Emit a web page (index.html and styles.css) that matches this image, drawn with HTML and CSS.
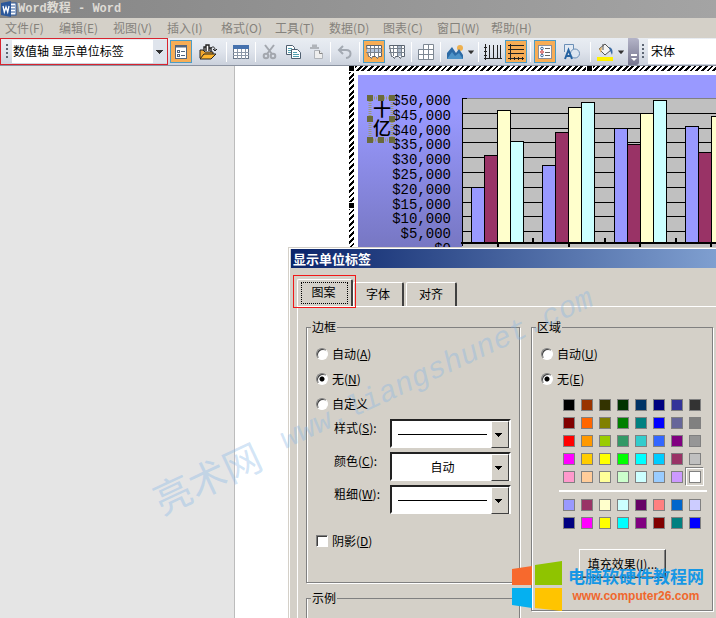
FILE: index.html
```html
<!DOCTYPE html>
<html lang="zh-CN">
<head>
<meta charset="UTF-8"/>
<meta name="viewport" content="width=device-width, initial-scale=1.0"/>
<title>Word教程 - Word</title>
<link rel="stylesheet" href="styles.css">
</head>
<body>

<!-- TITLE BAR -->
<header class="titlebar">
  <svg class="app-icon" width="16" height="16" viewBox="0 0 16 16">
    <rect x="7" y="2" width="8" height="12" fill="#fff" stroke="#2b579a"/>
    <path d="M10 5h4M10 8h4M10 11h4" stroke="#2b579a"/>
    <path d="M0 2l10-2v16l-10-2z" fill="#2b579a"/>
    <path d="M2 5l1.3 6L5 6l1.7 5L8 5" fill="none" stroke="#fff" stroke-width="1.3"/>
  </svg>
  <h1 class="app-title">Word教程 - Word</h1>
</header>

<!-- MENU -->
<nav class="menubar">
  <button class="menu-item">文件(F)</button>
  <button class="menu-item">编辑(E)</button>
  <button class="menu-item">视图(V)</button>
  <button class="menu-item">插入(I)</button>
  <button class="menu-item">格式(O)</button>
  <button class="menu-item">工具(T)</button>
  <button class="menu-item">数据(D)</button>
  <button class="menu-item">图表(C)</button>
  <button class="menu-item">窗口(W)</button>
  <button class="menu-item">帮助(H)</button>
</nav>

<!-- TOOLBAR -->
<div class="toolbar">
  <div class="object-box">
    <span class="grip"></span>
    <select class="object-select" aria-label="图表对象">
      <option>数值轴 显示单位标签</option>
    </select>
  </div>
  <button class="tool on" aria-label="设置格式">
    <svg width="16" height="16" viewBox="0 0 16 16">
      <rect x="2.500" y="1.500" width="11" height="13" fill="#fff" stroke="#54657c"/>
      <path d="M2 2.500h12" stroke="#54657c" stroke-width="2"/>
      <rect x="4.500" y="6.500" width="2" height="2" fill="none" stroke="#54657c"/><rect x="4.500" y="10.500" width="2" height="2" fill="none" stroke="#54657c"/>
      <path d="M8 7.500h4M8 11.500h4" stroke="#54657c"/>
    </svg>
  </button>
  <button class="tool wide" aria-label="图表类型">
    <svg width="18" height="16" viewBox="0 0 18 16">
      <path d="M5 8V3h2v4V1h3v6V4h2v4" fill="#fff" stroke="#222" stroke-width="1.400"/>
      <path d="M1 14V6h3l2 2h8v2" fill="#f0a830" stroke="#222"/>
      <path d="M1 15l4-5h12l-5 5z" fill="#ffb62e" stroke="#222"/>
      <path d="M12 4c2-2 4-1 4 2M14 5l2 2 2-2" fill="none" stroke="#222"/>
    </svg>
  </button>
  <span class="sep"></span>
  <button class="tool" aria-label="数据表">
    <svg width="16" height="16" viewBox="0 0 16 16">
      <rect x="0.500" y="1.500" width="15" height="13" fill="#fff" stroke="#6a7788"/>
      <rect x="0" y="1" width="16" height="4" fill="#4672ae"/>
      <path d="M0 8.500h16M0 11.500h16M4.500 5v10M8.500 5v10M12.500 5v10" stroke="#8c98a8"/>
    </svg>
  </button>
  <span class="sep"></span>
  <button class="tool" aria-label="剪切">
    <svg width="16" height="16" viewBox="0 0 16 16" fill="none" stroke="#a3a7ae" stroke-width="2">
      <path d="M3 1l7 9M12 1l-7 9"/><circle cx="4" cy="12" r="2.300"/><circle cx="11" cy="12" r="2.300"/>
    </svg>
  </button>
  <button class="tool" aria-label="复制">
    <svg width="16" height="16" viewBox="0 0 16 16" fill="#fff" stroke="#4f5f70">
      <path d="M1.500 1.500h6l2 2v7h-8z"/><path d="M3 4.500h4M3 6.500h4M3 8.500h4" stroke="#51a0b0"/>
      <path d="M6.500 5.500h6l3 3v6h-9z"/><path d="M8 8.500h4M8 10.500h6M8 12.500h6" stroke="#51a0b0"/>
    </svg>
  </button>
  <button class="tool" aria-label="粘贴">
    <svg width="16" height="16" viewBox="0 0 16 16" fill="#eee" stroke="#b0b4ba">
      <path d="M2 4h9M4 2.500h4v-1h-3v1" stroke-width="2"/>
      <path d="M6.500 6.500h5l3 3v5h-8z"/><path d="M11.500 6.500v3h3" stroke="#888"/>
    </svg>
  </button>
  <span class="sep"></span>
  <button class="tool" aria-label="撤消">
    <svg width="16" height="16" viewBox="0 0 16 16" fill="none" stroke="#a3a9b2" stroke-width="2">
      <path d="M6 2L2 6l4 4M2 6h7c6 0 6 7 0 8"/>
    </svg>
  </button>
  <span class="sep"></span>
  <button class="tool on" aria-label="按行">
    <svg width="16" height="16" viewBox="0 0 16 16">
      <path d="M.5 1.500h15v11h-3l-1 2-2-2h-3l-1 2-2-2h-1z" fill="#fff" stroke="#59636f"/>
      <rect x="1" y="5" width="14" height="4" fill="#b9c9df"/>
      <path d="M0 4.500h16M0 8.500h16M4.500 2v10M8.500 2v10M12.500 2v10" stroke="#77818d"/>
    </svg>
  </button>
  <button class="tool" aria-label="按列">
    <svg width="16" height="16" viewBox="0 0 16 16">
      <path d="M.5 1.500h15v11h-3l-1 2-2-2h-3l-1 2-2-2h-1z" fill="#fff" stroke="#59636f"/>
      <rect x="8" y="2" width="4" height="10" fill="#aab8ca"/>
      <path d="M0 4.500h16M0 8.500h16M4.500 2v10M8.500 2v10M12.500 2v10" stroke="#77818d"/>
    </svg>
  </button>
  <span class="sep"></span>
  <button class="tool" aria-label="模拟运算表">
    <svg width="16" height="16" viewBox="0 0 16 16">
      <path d="M5.500.5h10v15H.5v-10h5z" fill="#fff" stroke="#7e8893"/>
      <path d="M5.500 5v10M10.500 0v15M5 5.500h11M0 10.500h16" stroke="#7e8893"/>
    </svg>
  </button>
  <span class="sep"></span>
  <button class="tool" aria-label="绘图区">
    <svg width="16" height="16" viewBox="0 0 16 16">
      <circle cx="13" cy="4" r="3" fill="#eeb04e"/>
      <path d="M0 15V9l5-6 4 6 3-4 4 6v4z" fill="#2c6aa5"/><path d="M0 15l5-7 3 4 4-3 4 6z" fill="#4d93c8"/>
    </svg>
  </button>
  <button class="drop" aria-label="更多"></button>
  <span class="sep"></span>
  <button class="tool" aria-label="分类轴网格线">
    <svg width="18" height="16" viewBox="0 0 18 16" fill="none" stroke="#222" stroke-width="1">
      <path d="M1.500 0v16M0 14.500h18M5.500 1v13M9.500 1v13M13.500 1v13M16.500 1v13M0 3.500h3M0 7.500h3M0 11.500h3"/>
    </svg>
  </button>
  <button class="tool on" aria-label="数值轴网格线">
    <svg width="18" height="16" viewBox="0 0 18 16" fill="none" stroke="#222">
      <path d="M3.500 0v16M1 14.500h16M1 1.500h16M1 5.500h16M1 9.500h16M7.500 13v3M11.500 13v3M15.500 13v3"/>
    </svg>
  </button>
  <span class="sep"></span>
  <button class="tool on" aria-label="图例">
    <svg width="16" height="16" viewBox="0 0 16 16">
      <rect x="1.500" y="1.500" width="13" height="13" fill="#fff" stroke="#8b8f99"/>
      <g fill="none"><circle cx="5" cy="4.500" r="1.300" stroke="#39689c"/><circle cx="5" cy="8" r="1.300" stroke="#c33"/><circle cx="5" cy="11.500" r="1.300" stroke="#39689c"/></g>
      <path d="M8 4.500h5M8 8.500h5M8 11.500h5" stroke="#666"/>
    </svg>
  </button>
  <button class="tool wide" aria-label="绘图">
    <svg width="16" height="16" viewBox="0 0 16 16">
      <path d="M.5 8V.5h9v5" fill="#e2eaf4" stroke="#6b8fb6"/>
      <circle cx="11" cy="9.500" r="4.500" fill="#dce6f1" stroke="#6b8fb6"/>
      <path d="M1 15L4.500 6 8 15M2 12h5" fill="none" stroke="#2562a0" stroke-width="2"/>
    </svg>
  </button>
  <span class="sep"></span>
  <button class="tool" aria-label="填充颜色">
    <svg width="18" height="18" viewBox="0 0 18 18">
      <path d="M3 6l6-5 6 6-6 5z" fill="#f4f4f4" stroke="#555"/><path d="M7 1v6" stroke="#555"/>
      <path d="M13 4c4 1 4 5 3 8-1-2-1-3-2-4z" fill="#3d6da5"/><path d="M3 6l3-2-1 6z" fill="#e0b060"/>
      <rect x="1" y="14" width="16" height="4" fill="#fff200"/>
    </svg>
  </button>
  <button class="drop" aria-label="填充颜色列表"></button>
  <button class="overflow" aria-label="工具栏选项"></button>
  <span class="grip"></span>
  <select class="font-select" aria-label="字体">
    <option>宋体</option>
  </select>
</div>

<!-- DOCUMENT -->
<main class="workspace">
  <div class="gutter"></div>
  <div class="page">
    <div class="chart-object">
      <svg class="chart" width="480" height="240" viewBox="0 0 480 240">
        <defs>
          <linearGradient id="chartBg" x1="0" y1="0" x2="0" y2="1">
            <stop offset="0.150" stop-color="#9999ff"/>
            <stop offset="0.800" stop-color="#7272ba"/>
            <stop offset="1" stop-color="#6060a0"/>
          </linearGradient>
        </defs>
        <rect width="480" height="240" fill="url(#chartBg)"/>
        <rect x="104" y="23" width="376" height="150" fill="#c0c0c0"/>
        <path d="M104 23.500h376" stroke="#808080"/>
        <path class="grid" d="M104 38.500h376M104 53.500h376M104 67.500h376M104 82.500h376M104 97.500h376M104 112.500h376M104 127.500h376M104 141.500h376M104 156.500h376"/>
        <g class="bars"></g>
        <path d="M104.500 23v148M104 23.500h5" stroke="#000" fill="none"/>
        <path d="M103 168h377" stroke="#000" stroke-width="2"/>
        <path d="M140 168v4M211 168v4M282 168v4M353 168v4M175 163v4M247 163v4M318 163v4" stroke="#000" stroke-width="2"/>
        <g class="axis-labels">
          <text x="93" y="30">$50,000</text>
          <text x="93" y="45">$45,000</text>
          <text x="93" y="60">$40,000</text>
          <text x="93" y="74">$35,000</text>
          <text x="93" y="89">$30,000</text>
          <text x="93" y="104">$25,000</text>
          <text x="93" y="119">$20,000</text>
          <text x="93" y="134">$15,000</text>
          <text x="93" y="148">$10,000</text>
          <text x="93" y="163">$5,000</text>
          <text x="93" y="178">$0</text>
        </g>
        <rect x="12" y="23" width="22" height="42" fill="none" stroke="#9a9a78" stroke-width="3" stroke-dasharray="1 1"/>
        <g class="unit-label">
          <text x="24" y="41">十</text>
          <text x="24" y="60">亿</text>
        </g>
        <path d="M9 20h6v6H9zM20 20h6v6h-6zM31 20h6v6h-6zM9 41h6v6H9zM31 41h6v6h-6zM9 62h6v6H9zM20 62h6v6h-6zM31 62h6v6h-6z" fill="#6a6a3c"/>
      </svg>
      <span class="handle corner"></span>
      <span class="handle top"></span>
      <span class="handle left"></span>
    </div>
  </div>
</main>

<!-- FORMAT DIALOG -->
<section class="dialog" role="dialog" aria-label="显示单位标签">
  <h2 class="dialog-title">显示单位标签</h2>
  <div class="tabs">
    <button class="tab active">图案</button>
    <button class="tab">字体</button>
    <button class="tab">对齐</button>
  </div>
  <div class="panel">
    <div class="column">
      <fieldset class="group border-group">
        <legend>边框</legend>
        <label class="choice"><input type="radio" name="border"/><span>自动(<u>A</u>)</span></label>
        <label class="choice"><input type="radio" name="border" checked/><span>无(<u>N</u>)</span></label>
        <label class="choice"><input type="radio" name="border"/><span>自定义</span></label>
        <div class="fields">
          <div class="field">
            <label for="lineStyle">样式(<u>S</u>):</label>
            <span class="combo line"><select id="lineStyle"><option></option></select></span>
          </div>
          <div class="field">
            <label for="lineColor">颜色(<u>C</u>):</label>
            <span class="combo"><select id="lineColor"><option>自动</option></select></span>
          </div>
          <div class="field">
            <label for="lineWeight">粗细(<u>W</u>):</label>
            <span class="combo line"><select id="lineWeight"><option></option></select></span>
          </div>
        </div>
        <label class="choice"><input type="checkbox"/><span>阴影(<u>D</u>)</span></label>
      </fieldset>
      <fieldset class="group sample-group">
        <legend>示例</legend>
      </fieldset>
    </div>
    <fieldset class="group area-group">
      <legend>区域</legend>
      <label class="choice"><input type="radio" name="area"/><span>自动(<u>U</u>)</span></label>
      <label class="choice"><input type="radio" name="area" checked/><span>无(<u>E</u>)</span></label>
      <div class="palette standard"></div>
      <div class="palette chart-colors"></div>
      <button class="fill-btn">填充效果(<u>I</u>)...</button>
    </fieldset>
  </div>
</section>

<!-- WATERMARKS -->
<div class="watermark"><span class="mark-name">亮术网</span><span class="mark-url">www.liangshunet.com</span></div>
<div class="site-badge">
  <svg width="50" height="50" viewBox="0 0 50 50">
    <path d="M0 8l20-3v19H0z" fill="#f7692d"/>
    <path d="M23 4l27-4v24H23z" fill="#8fc400"/>
    <path d="M0 27h20v20L0 44z" fill="#05b0f0"/>
    <path d="M23 27h27v23l-27-3z" fill="#ffc400"/>
  </svg>
  <div class="badge-text">
    <span class="badge-name">电脑软硬件教程网</span>
    <span class="badge-url">www.computer26.com</span>
  </div>
</div>

<script>
(function(){
const standard = [
  "#000000","#993300","#333300","#003300","#003366","#000080","#333399","#333333",
  "#800000","#ff6600","#808000","#008000","#008080","#0000ff","#666699","#808080",
  "#ff0000","#ff9900","#99cc00","#339966","#33cccc","#3366ff","#800080","#969696",
  "#ff00ff","#ffcc00","#ffff00","#00ff00","#00ffff","#00ccff","#993366","#c0c0c0",
  "#ff99cc","#ffcc99","#ffff99","#ccffcc","#ccffff","#99ccff","#cc99ff","#ffffff"
];
const chartColors = [
  "#9999ff","#993366","#ffffcc","#ccffff","#660066","#ff8080","#0066cc","#ccccff",
  "#000080","#ff00ff","#ffff00","#00ffff","#800080","#800000","#008080","#0000ff"
];

function fillPalette(selector,colors){
  const box=document.querySelector(selector);
  colors.forEach(c=>{
    const b=document.createElement('button');
    b.className='swatch';
    b.style.background=c;
    b.setAttribute('aria-label',c);
    if(c==='#ffffff') b.classList.add('selected');
    box.appendChild(b);
  });
}
fillPalette('.standard',standard);
fillPalette('.chart-colors',chartColors);

// one row per category, bar heights above the axis
const series=["#9999ff","#993366","#ffffcc","#ccffff"];
const data=[[55,87,132,101],[77,110,135,140],[114,98,129,142],[116,90,126,120]];
const bars=document.querySelector('.bars');
data.forEach((row,g)=>{
  row.forEach((h,i)=>{
    const r=document.createElementNS('http://www.w3.org/2000/svg','rect');
    r.setAttribute('x',Math.round(113+g*71.4)+i*13+.5);
    r.setAttribute('y',167.5-h);
    r.setAttribute('width',13);
    r.setAttribute('height',h);
    r.setAttribute('fill',series[i]);
    bars.appendChild(r);
  });
});
})();
</script>
</body>
</html>
```
FILE: styles.css
```css
:root {
  --face:#d4d0c8;
  --shade:#808080;
  --dark:#404040;
}
* {box-sizing:border-box;}
html,body {
  margin:0; padding:0; height:100%; overflow:hidden;
}
body {
  position:relative; display:flex; flex-direction:column; background:#fff; color:#000;
  font:12px/18px "Noto Sans CJK SC", sans-serif;
}
button,select,input {font:inherit; color:inherit; margin:0; padding:0; border:0; border-radius:0;}
svg {display:block;}

/* TITLE BAR AND MENU */
.titlebar {
  display:flex; align-items:center; gap:1px; height:18px; flex:none; padding-left:1px;
  background:linear-gradient(90deg,#858585,#a4a4a4);
}
.app-title {
  margin:0; color:#dedbd5; font:bold 12px/18px "Liberation Mono","Noto Sans CJK SC",monospace;
}
.menubar {display:flex; flex:none; height:20px; padding-left:5px; background:var(--face);}
.menu-item {
  width:54px; background:none; color:#85827c; text-align:left; white-space:nowrap; line-height:20px;
}

/* TOOLBAR */
.toolbar {
  display:flex; align-items:center; flex:none; height:28px;
  background:linear-gradient(#e9edf3,#dfe4ec 50%,#cbd1dc); border-bottom:1px solid #8b93a1;
}
.object-box {
  display:flex; align-items:center; width:168px; height:27px; flex:none; padding:1px 0 1px 2px;
  margin-right:1px; border:1px solid #d8232f;
}
.grip {
  flex:none; width:3px; height:16px; margin:0 3px;
  background:repeating-linear-gradient(#5d6674 0 2px,transparent 2px 4px) left/2px 100% no-repeat;
}
.object-select,.font-select {
  appearance:none; background:#fff; height:23px; line-height:20px; padding:0 0 2px 1px;
}
.object-select {
  flex:1; min-width:0;
  background:
    linear-gradient(to bottom right,#333 50%,transparent 50%) right 3px center/4px 4px no-repeat,
    linear-gradient(to bottom left,#333 50%,transparent 50%) right 7px center/4px 4px no-repeat,
    linear-gradient(#dfe4ec,#dfe4ec) right/14px 100% no-repeat,
    #fff;
}
.font-select {flex:1; min-width:0; height:25px; padding-left:3px;}
.tool {
  display:flex; align-items:center; justify-content:center; flex:none;
  width:22px; height:23px; margin-left:1px; background:none;
}
.tool.wide {width:30px;}
.tool.on {background:#f7ad55; border:1px solid #4c9cc4;}
.sep {flex:none; width:1px; height:20px; margin:0 2px 0 3px; background:#fff;}
.drop {
  flex:none; width:8px; height:22px; margin-left:1px; background:#333;
  clip-path:polygon(10% 45%,90% 45%,50% 62%);
}
.overflow {
  position:relative; flex:none; width:11px; height:27px; margin-left:3px;
  background:linear-gradient(#b4b4c8,#77778f); border-radius:0 3px 3px 0;
}
.overflow::before {
  content:""; position:absolute; left:3px; bottom:9px; width:6px; height:2px; background:#fff;
}
.overflow::after {
  content:""; position:absolute; left:3px; bottom:4px; border:3px solid transparent; border-top-color:#fff; border-bottom:0;
}

/* DOCUMENT */
.workspace {display:flex; flex:1; min-height:0; overflow:hidden;}
.gutter {flex:none; width:235px; background:#e5e5e5; border-right:1px solid #bcbcbc;}
.page {flex:1; min-width:0; padding-left:114px; background:#fff; overflow:hidden;}
.chart-object {
  position:relative; width:max-content; padding:5px;
  background:repeating-linear-gradient(135deg,#000 0 2px,#fff 2px 4px);
}
.chart {border:4px solid #fff; box-sizing:content-box;}
.grid {stroke:#000; fill:none;}
.bars rect {stroke:#000;}
.axis-labels text {font:14px "Liberation Mono",monospace; text-anchor:end;}
.unit-label text {font:500 18px "Noto Sans CJK SC",sans-serif; text-anchor:middle;}
.handle {position:absolute; width:5px; height:5px; background:#000; outline:1px solid #fff;}
.handle.corner {left:0; top:0;}
.handle.top {left:238px; top:0;}
.handle.left {left:0; top:137px;}

/* DIALOG */
.dialog {
  position:absolute; left:288px; right:0; top:247px; bottom:0; overflow:hidden;
  display:flex; flex-direction:column; background:var(--face);
  border:1px solid var(--face); border-width:1px 0 0 1px; box-shadow:inset 1px 1px #fff;
  padding:1px 0 0 2px;
}
.dialog-title {
  margin:0; padding-left:2px; flex:none; color:#fff; font-size:13px; font-weight:bold; line-height:19px;
  background:linear-gradient(90deg,#0a246a,#7f9fd0);
}
.tabs {display:flex; align-items:flex-end; flex:none; padding:11px 0 0 6px;}
.tab {
  width:51px; height:24px; margin-right:2px; padding-bottom:2px; background:var(--face);
  border:solid #fff; border-width:1px 2px 0 1px; border-right-color:var(--dark); border-radius:2px 2px 0 0;
}
.tab.active {
  position:relative; z-index:1; width:56px; height:27px; margin-right:0; padding-right:2px;
}
.tab.active::before {
  content:""; position:absolute; inset:2px 3px 2px 3px; border:1px dotted #000;
}
.tab.active::after {
  content:""; position:absolute; inset:-5px -5px -2px -5px; border:1px solid #f01818;
}
.panel {
  display:flex; align-items:flex-start; gap:11px; flex:1; margin-left:6px; padding:11px 3px 0 8px;
  border:solid #fff; border-width:1px 0 0 1px;
}
.column {flex:1 1 214px; min-width:0;}
.group {
  margin:0; min-width:0; padding:5px 8px 0 9px; border:1px solid var(--shade);
  box-shadow:inset 1px 0 #fff,1px 1px #fff;
}
.group legend {padding:0 1px; margin-left:-5px; line-height:18px;}
.border-group {height:265px;}
.sample-group {height:80px; margin-top:6px;}
.area-group {flex:1 1 182px; height:293px;}
.choice {display:flex; align-items:center; gap:4px; height:25px;}
.choice input {
  appearance:none; flex:none; width:12px; height:12px; background:#fff;
  border:1px solid var(--shade); border-right-color:#fff; border-bottom-color:#fff;
  box-shadow:inset 1px 1px var(--dark);
}
.choice input[type=radio] {border-radius:50%;}
.choice input[type=radio]:checked {background:radial-gradient(circle,#000 0 2px,#fff 3px);}
.fields {padding:2px 0 11px 18px;}
.field {display:flex; align-items:flex-start; height:33px; line-height:20px;}
.field label {flex:none; width:56px;}
.combo {
  position:relative; flex:1; min-width:0; height:29px;
  border:2px solid; border-color:#222 #fff #fff #222; margin-top:1px;
}
.combo select {
  display:block; appearance:none; width:100%; height:100%; padding-right:16px; text-align-last:center;
  background:#fff;
}
.combo::after {
  content:""; position:absolute; right:0; top:0; width:16px; height:100%; pointer-events:none;
  border:1px solid; border-color:#fff var(--dark) var(--dark) #fff;
  background:
    linear-gradient(to bottom right,#000 50%,transparent 50%) 7px center/4px 4px no-repeat,
    linear-gradient(to bottom left,#000 50%,transparent 50%) 3px center/4px 4px no-repeat,
    var(--face);
}
.combo.line::before {
  content:""; position:absolute; left:6px; right:22px; top:50%; border-top:1px solid #000; pointer-events:none;
}

.palette {display:grid; grid-template-columns:repeat(8,18px); width:148px; margin-left:18px; padding:5px 0 4px 1px;}
.chart-colors {border-top:2px solid #fff; padding-top:4px;}
.swatch {width:12px; height:12px; margin:3px; border:1px solid var(--shade);}
.swatch.selected {outline:1px solid #fff; outline-offset:2px; box-shadow:0 0 0 2px var(--face),-1px -1px 0 3px var(--shade);}
.fill-btn {
  display:block; width:87px; height:29px; margin:13px 0 0 38px; background:var(--face); white-space:nowrap;
  border:1px solid; border-color:#fff var(--dark) var(--dark) #fff; box-shadow:inset -1px -1px var(--shade);
}

/* WATERMARKS */
.watermark {
  position:absolute; left:155px; top:481px; display:flex; align-items:center; gap:26px; white-space:nowrap;
  color:rgba(130,180,230,.36); transform:rotate(-25deg); transform-origin:left center; pointer-events:none;
}
.mark-name {font:38px/40px "Noto Sans CJK SC",sans-serif;}
.mark-url {font:italic 30px/40px "Liberation Mono",monospace;}
.site-badge {
  position:absolute; right:12px; bottom:7px; display:flex; align-items:center; gap:6px; pointer-events:none;
}
.badge-text {display:flex; flex-direction:column; align-items:center; white-space:nowrap;}
.badge-name {color:#1697e5; font-weight:bold; font-size:17px; line-height:20px;}
.badge-url {color:#f0672c; font:bold 12px/20px "Liberation Sans",sans-serif;}
```
